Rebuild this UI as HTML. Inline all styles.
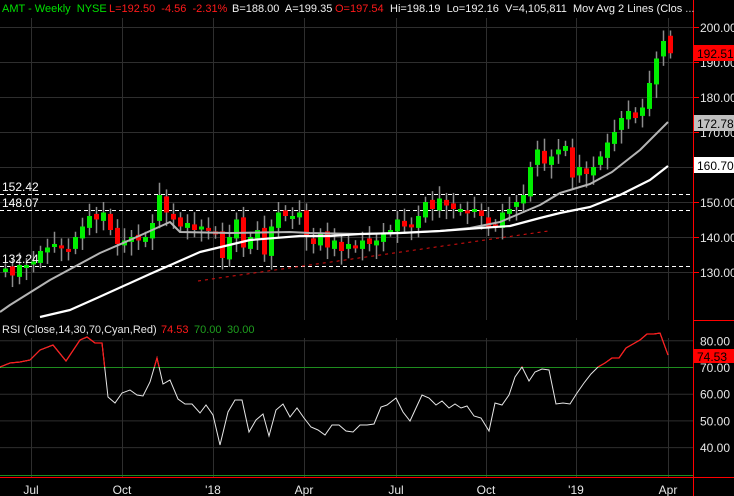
<!DOCTYPE html>
<html><head><meta charset="utf-8"><style>
html,body{margin:0;padding:0;background:#000;width:734px;height:496px;overflow:hidden;font-family:"Liberation Sans",sans-serif}
.h{position:absolute;top:2px;font-size:11px;white-space:pre;line-height:14px}
.g{color:#00e000}.r{color:#ff1a1a}.w{color:#f0f0f0}
</style></head><body>
<svg id="s" width="734" height="496" style="position:absolute;left:0;top:0" xmlns="http://www.w3.org/2000/svg" font-family="Liberation Sans, sans-serif" font-size="12">
<defs><clipPath id="top"><rect x="0" y="0" width="694" height="367"/></clipPath>
<clipPath id="pp"><rect x="0" y="18" width="694" height="302"/></clipPath></defs>
<g stroke="#2e2e2e" stroke-width="1" id="grid"></g>
<g id="dash" stroke="#fff" stroke-dasharray="4,3">
<line x1="0" y1="194.5" x2="694" y2="194.5"/><line x1="0" y1="210.5" x2="694" y2="210.5"/><line x1="0" y1="266.5" x2="694" y2="266.5"/></g>
<line x1="198" y1="281" x2="548" y2="231" stroke="#e01010" stroke-dasharray="3,4"/>
<g id="candles"></g>
<g clip-path="url(#pp)" fill="none" stroke-linejoin="round">
<polyline stroke="#b4b4b4" stroke-width="2" points="0,312 10,305 50,280 100,253 130,240 170,222 180,232 230,233 290,232 310,233 360,234 400,233 440,231 470,228 500,222 540,205 560,193 590,184 612,172 640,150 668,122"/>
<polyline stroke="#fff" stroke-width="2.2" points="40,317 70,310 97,298 150,274 200,252 250,240 300,236 330,236 360,234 400,233 440,231 480,228 510,226 540,218 560,213 590,207 620,195 650,180 668,166"/>
</g>
<text x="2" y="191" fill="#fff">152.42</text><text x="2" y="207" fill="#fff">148.07</text><text x="2" y="263" fill="#fff">132.24</text>
<line x1="0" y1="367.5" x2="694" y2="367.5" stroke="#1e8c1e"/>
<line x1="0" y1="475.5" x2="694" y2="475.5" stroke="#1e8c1e"/>
<polyline id="rsi" fill="none" stroke="#e6e6e6" stroke-width="1"/>
<polyline id="rsi2" fill="none" stroke="#ff1a1a" stroke-width="1.2" clip-path="url(#top)"/>
<g font-size="11"><text x="2" y="333" fill="#e6e6e6">RSI (Close,14,30,70,Cyan,Red)</text>
<text x="161" y="333" fill="#ff1a1a">74.53</text><text x="194" y="333" fill="#1e9e1e">70.00</text><text x="227" y="333" fill="#1e9e1e">30.00</text></g>
<line x1="693.5" y1="0" x2="693.5" y2="496" stroke="#ff0000"/>
<line x1="694" y1="320.5" x2="734" y2="320.5" stroke="#ff0000"/>
<line x1="0" y1="477.5" x2="734" y2="477.5" stroke="#ff0000"/>
<g id="ax" fill="#e6e6e6"></g>
<rect x="694" y="45" width="40" height="16" fill="#ff0000"/><text x="697" y="58" fill="#000">192.51</text>
<rect x="694" y="115" width="40" height="16" fill="#c0c0c0"/><text x="697" y="128" fill="#000">172.78</text>
<rect x="694" y="157" width="40" height="16" fill="#fff"/><text x="697" y="170" fill="#000">160.70</text>
<rect x="694" y="349" width="40" height="14" fill="#ff0000"/><text x="697" y="361" fill="#000">74.53</text>
</svg>
<div class="h g" style="left:2px">AMT - Weekly  NYSE</div>
<div class="h r" style="left:109px">L=192.50  -4.56  -2.31%</div>
<div class="h w" style="left:232px">B=188.00  A=199.35</div>
<div class="h r" style="left:335px">O=197.54</div>
<div class="h w" style="left:390px">Hi=198.19  Lo=192.16  V=4,105,811  Mov Avg 2 Lines (Clos<span style="color:#ccc"> ...</span></div>
<script>
var NS="http://www.w3.org/2000/svg";
function el(p,t,a){var e=document.createElementNS(NS,t);for(var k in a)e.setAttribute(k,a[k]);p.appendChild(e);return e;}
var grid=document.getElementById('grid'),ax=document.getElementById('ax');
var vx=[31,122,213,304,396,486,576,668],vl=["Jul","Oct","'18","Apr","Jul","Oct","'19","Apr"];
vx.forEach(function(x,i){el(grid,'line',{x1:x+.5,y1:18,x2:x+.5,y2:320});el(grid,'line',{x1:x+.5,y1:338,x2:x+.5,y2:477});
var t=el(ax,'text',{x:x,y:494,'text-anchor':'middle'});t.textContent=vl[i];});
var pv=[200,190,180,170,160,150,140,130];
pv.forEach(function(p){var y=27+(200-p)*3.5;el(grid,'line',{x1:0,y1:y+.5,x2:694,y2:y+.5});el(grid,'line',{x1:694,y1:y+.5,x2:699,y2:y+.5,stroke:'#f00'});
var t=el(ax,'text',{x:700,y:y+5});t.textContent=p.toFixed(2);});
[80,70,60,50,40].forEach(function(r){var y=367-(r-70)*2.67;if(r!=70)el(grid,'line',{x1:0,y1:y+.5,x2:694,y2:y+.5});
var t=el(ax,'text',{x:700,y:y+5});t.textContent=r.toFixed(2);});
var c=[131,129,132,132,133,136,137,138,137,136,140,143,146,145,147,142,138,139,140,139,140,144,152,147,145,143,144,142,143,142,141,134,140,145,137,140,142,135,143,147,146,146,147,140,138,141,137,139,136,138,137,139,138,139,141,142,145,143,143,146,150,148,151,149,148,148,147,148,146,143,143,147,148,150,152,160,165,161,163,165,166,157,160,158,160,163,167,170,174,176,174,177,184,191,196,192.5];
var cg=document.getElementById('candles');
function Y(p){return 27+(200-p)*3.5;}
var o=130;
for(var i=0;i<c.length;i++){var x=5+i*7,cl=c[i];if(i==95)o=197.5;
var hi=Math.max(o,cl)+1.5+((i*7)%5)*0.5,lo=Math.min(o,cl)-1.5-((i*3)%5)*0.6;
el(cg,'line',{x1:x+.5,y1:Y(hi),x2:x+.5,y2:Y(lo),stroke:'#8c8c8c','stroke-width':1.5});
var t=Y(Math.max(o,cl)),b=Y(Math.min(o,cl));if(b-t<3){b=t+3;}
el(cg,'rect',{x:x-2,y:t,width:5,height:b-t,fill:cl>=o?'#00ee00':'#ff0000'});
o=cl+(i%3==0?0.6:-0.4);}
var rp="0,367 10,363 20,362 30,360 40,350 53,345 66,361 80,340 87,337 95,343 102,343 108,397 115,403 122,393 130,390 137,395 143,396 150,382 157,358 163,384 170,380 178,399 185,404 192,404 200,413 206,405 213,415 220,445 228,412 235,400 242,400 249,432 256,420 263,414 269,436 276,410 283,404 290,417 297,408 304,418 311,427 318,430 325,435 332,425 339,425 346,431 353,432 360,425 367,425 374,424 381,407 387,405 396,398 403,412 410,421 416,408 422,395 429,398 436,405 442,401 449,408 455,404 461,408 467,406 474,416 481,418 489,431 495,403 502,405 509,395 515,377 522,367 529,381 535,372 542,369 549,370 556,404 563,403 570,404 577,393 584,383 591,374 598,367 605,363 612,358 619,358 626,348 633,344 640,340 647,334 654,334 660,333 668,355";
document.getElementById('rsi').setAttribute('points',rp);document.getElementById('rsi2').setAttribute('points',rp);
</script>
</body></html>
